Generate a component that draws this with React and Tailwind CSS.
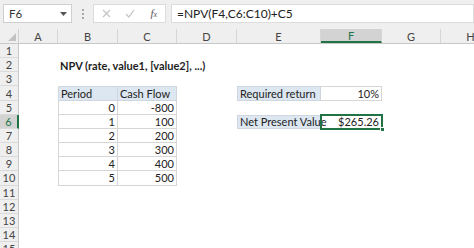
import React from "react";

const COLS = [
  { k: "A", w: 39 },
  { k: "B", w: 60 },
  { k: "C", w: 59 },
  { k: "D", w: 60 },
  { k: "E", w: 84 },
  { k: "F", w: 61 },
  { k: "G", w: 59 },
  { k: "H", w: 60 },
];

const RH = "h-[14.17px]";

function Cell({ w, className = "", children }) {
  return (
    <div
      className={`shrink-0 h-full flex items-center overflow-visible whitespace-nowrap ${className}`}
      style={{ width: w }}
    >
      {children}
    </div>
  );
}

const tableRows = [
  ["0", "-800"],
  ["1", "100"],
  ["2", "200"],
  ["3", "300"],
  ["4", "400"],
  ["5", "500"],
];

function renderCell(row, col) {
  const w = col.w;
  const key = col.k;
  if (row === 2 && key === "B")
    return (
      <Cell key={key} w={w} className="pl-[2px] font-bold text-[#1e1e1e] relative z-10">
        NPV (rate, value1, [value2], ...)
      </Cell>
    );
  if (row === 4 && key === "B")
    return (
      <Cell key={key} w={w} className="bg-[#dde7f1] border border-[#cfd6de] pl-[2px]">
        Period
      </Cell>
    );
  if (row === 4 && key === "C")
    return (
      <Cell key={key} w={w} className="bg-[#dde7f1] border-y border-r border-[#cfd6de] pl-[2px]">
        Cash Flow
      </Cell>
    );
  if (row >= 5 && row <= 10 && key === "B")
    return (
      <Cell key={key} w={w} className="border-l border-r border-b border-[#d6d6d6] justify-end pr-[2px]">
        {tableRows[row - 5][0]}
      </Cell>
    );
  if (row >= 5 && row <= 10 && key === "C")
    return (
      <Cell key={key} w={w} className="border-r border-b border-[#d6d6d6] justify-end pr-[2px]">
        {tableRows[row - 5][1]}
      </Cell>
    );
  if (row === 4 && key === "E")
    return (
      <Cell key={key} w={w} className="bg-[#dde7f1] border border-[#cfd6de] pl-[2px]">
        Required return
      </Cell>
    );
  if (row === 4 && key === "F")
    return (
      <Cell key={key} w={w} className="border-y border-r border-[#d6d6d6] justify-end pr-[2px]">
        10%
      </Cell>
    );
  if (row === 6 && key === "E")
    return (
      <Cell key={key} w={w} className="bg-[#dde7f1] border border-[#cfd6de] pl-[2px]">
        Net Present Value
      </Cell>
    );
  if (row === 6 && key === "F")
    return (
      <Cell key={key} w={w} className="relative justify-end pr-[3px]">
        <div className="absolute left-[-1px] top-[-1px] right-[-1px] bottom-[-1px] border-2 border-[#217346]" />
        <div className="absolute right-[-3px] bottom-[-3px] w-[5px] h-[5px] bg-[#217346] border border-white" />
        <span className="relative">$265.26</span>
      </Cell>
    );
  return <Cell key={key} w={w} />;
}

export default function App() {
  const rows = Array.from({ length: 15 }, (_, i) => i + 1);
  return (
    <div className="w-[474px] h-[248px] overflow-hidden bg-white text-[11px] text-[#222] font-['Lato','Open_Sans',sans-serif] leading-none">
      {/* Formula bar */}
      <div className="h-[29px] bg-[#efefef] flex items-start pt-[4px] pl-[3px]">
        <div className="w-[69px] h-[19px] bg-white border border-[#cfcfcf] flex items-center pl-[5px] pr-[4px] justify-between">
          <span className="text-[#333] text-[11.5px]">F6</span>
          <svg width="7" height="4" viewBox="0 0 7 4">
            <path d="M0 0 H7 L3.5 4 Z" fill="#555" />
          </svg>
        </div>
        <div className="w-[21px] h-[19px] flex flex-col items-center justify-center gap-[2px]">
          <div className="w-[2px] h-[2px] bg-[#a8a8a8]" />
          <div className="w-[2px] h-[2px] bg-[#a8a8a8]" />
          <div className="w-[2px] h-[2px] bg-[#a8a8a8]" />
        </div>
        <div className="w-[73px] h-[19px] bg-white border border-[#dcdcdc] flex items-center">
          <div className="w-[25px] flex justify-center">
            <svg width="9" height="9" viewBox="0 0 9 9">
              <path d="M1 1 L8 8 M8 1 L1 8" stroke="#c4c4c4" strokeWidth="1.2" />
            </svg>
          </div>
          <div className="w-[25px] flex justify-center">
            <svg width="10" height="9" viewBox="0 0 10 9">
              <path d="M1 5 L3.8 8 L9 1" stroke="#c4c4c4" strokeWidth="1.2" fill="none" />
            </svg>
          </div>
          <div className="w-[23px] flex justify-center font-['Liberation_Serif',serif] italic text-[11px] text-[#555]">
            f<span className="text-[8px] self-end">x</span>
          </div>
        </div>
        <div className="ml-[5px] flex-1 h-[19px] bg-white border border-[#dcdcdc] flex items-center pl-[5px] text-[12px] text-[#222]">
          =NPV(F4,C6:C10)+C5
        </div>
      </div>

      {/* Column headers */}
      <div className="h-[15px] flex bg-[#efefef] border-b border-[#c8c8c8]">
        <div className="w-[19px] shrink-0 h-full border-r border-[#d0d0d0] relative">
          <svg className="absolute right-[2px] bottom-[2px]" width="8" height="8" viewBox="0 0 8 8">
            <path d="M8 0 V8 H0 Z" fill="#c2c2c2" />
          </svg>
        </div>
        {COLS.map((c) => (
          <div
            key={c.k}
            className={`shrink-0 h-full flex items-center justify-center border-r border-[#d6d6d6] text-[#444] ${
              c.k === "F" ? "bg-[#d3d3d3] border-b-2 border-b-[#217346] text-[#217346]" : ""
            }`}
            style={{ width: c.w }}
          >
            {c.k}
          </div>
        ))}
      </div>

      {/* Rows */}
      {rows.map((r) => (
        <div key={r} className={`${RH} flex`}>
          <div
            className={`w-[19px] shrink-0 h-full flex items-center justify-center border-b border-[#dadada] text-[#444] ${
              r === 6
                ? "bg-[#d3d3d3] border-r-2 border-r-[#217346] text-[#217346]"
                : "bg-[#efefef] border-r border-r-[#c8c8c8]"
            }`}
          >
            {r}
          </div>
          {COLS.map((c) => renderCell(r, c))}
        </div>
      ))}
    </div>
  );
}
